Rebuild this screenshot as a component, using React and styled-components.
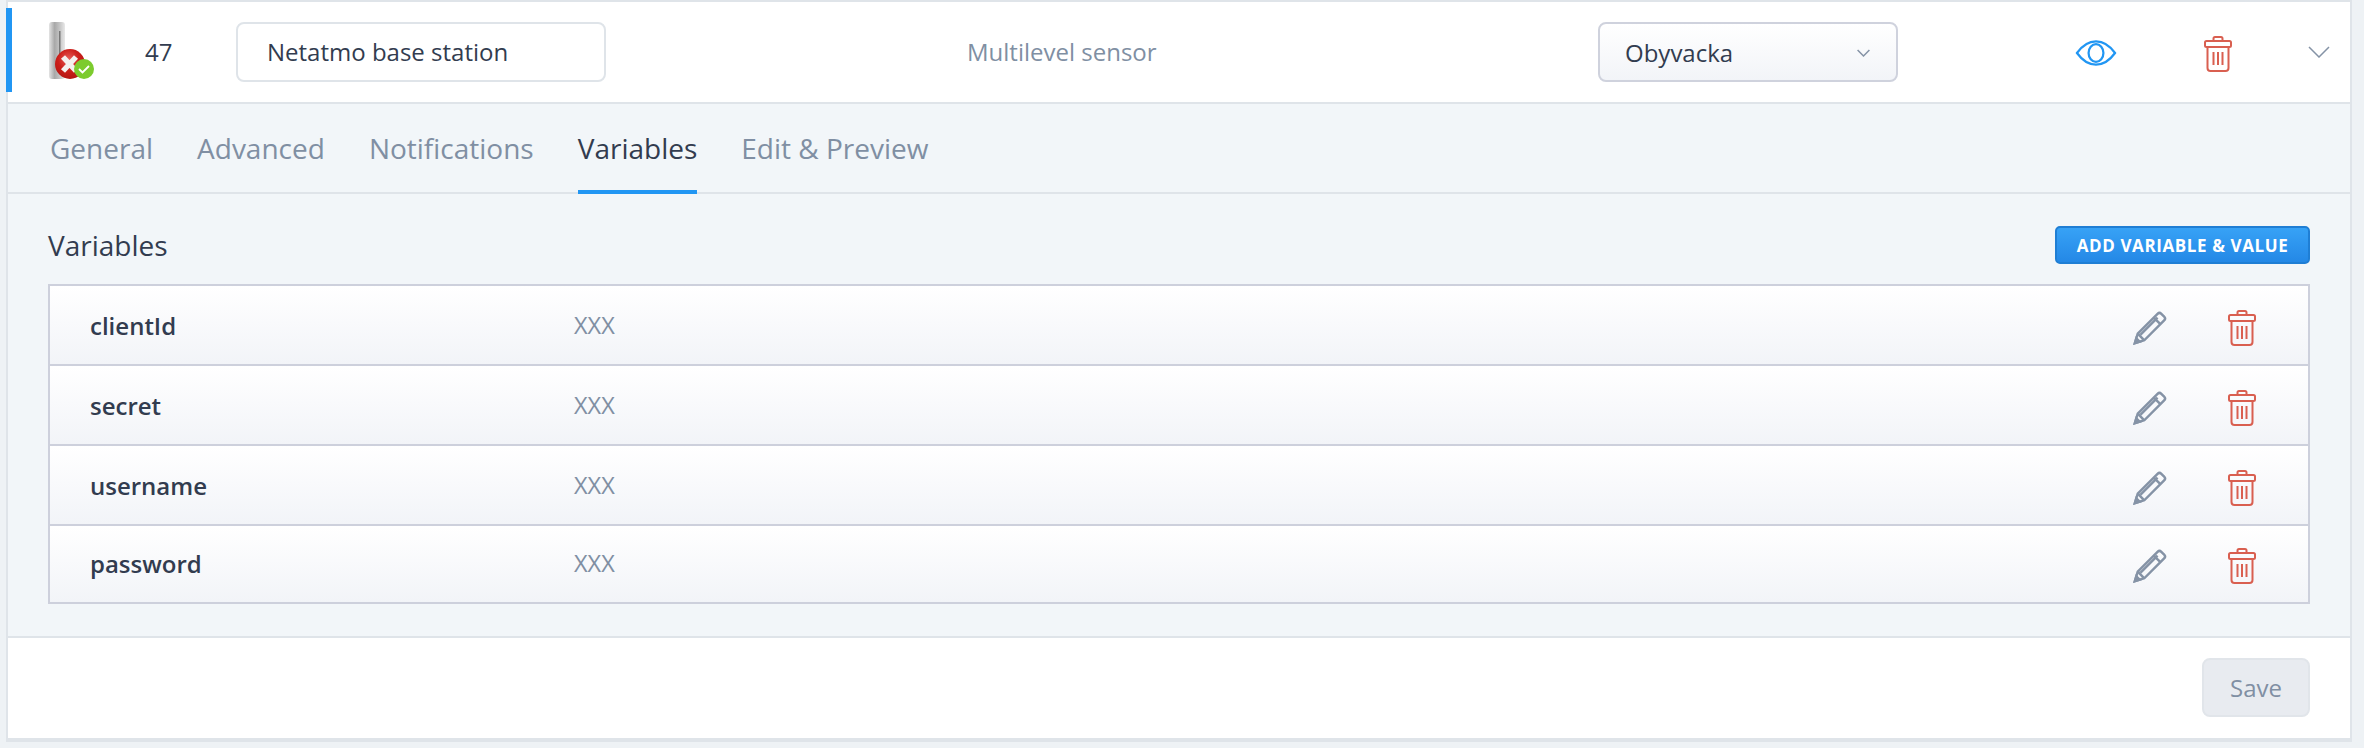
import styled, { createGlobalStyle } from "styled-components";

const GlobalStyle = createGlobalStyle`
  html, body {
    margin: 0;
    padding: 0;
    background: #eef2f5;
    font-family: "Open Sans", sans-serif;
    color: #323c4f;
  }
  * {
    box-sizing: border-box;
  }
`;

const Page = styled.div`
  padding: 0 12px 6px 6px;
  height: 748px;
  overflow: hidden;
`;

const Card = styled.div`
  position: relative;
  background: #fff;
  border: 2px solid #dfe4e9;
  border-bottom-width: 4px;
  border-top-width: 2px;
`;

const ActiveBar = styled.span`
  position: absolute;
  left: -2px;
  top: 6px;
  width: 6px;
  height: 84px;
  background: #2196f3;
`;

const Header = styled.div`
  display: grid;
  grid-template-columns: 137px 91px 370px 361px 631px 476px 130px 104px 1fr;
  align-items: center;
  height: 102px;
  border-bottom: 2px solid #dfe4e9;
`;

const DeviceIcon = styled.div`
  display: flex;
  justify-content: flex-start;
  padding-left: 32px;
`;

const Num = styled.span`
  font-size: 24px;
  padding-bottom: 2px;
`;

const NameInput = styled.div`
  height: 60px;
  padding: 0 29px 2px;
  display: flex;
  align-items: center;
  font-size: 24px;
  border: 2px solid #dfe4e9;
  border-radius: 8px;
  background: #fff;
`;

const TypeText = styled.span`
  font-size: 24px;
  color: #808fa3;
  padding-bottom: 2px;
`;

const Select = styled.div`
  width: 300px;
  height: 60px;
  padding: 0 26px 0 25px;
  display: flex;
  align-items: center;
  justify-content: space-between;
  font-size: 24px;
  border: 2px solid #cfd2dd;
  border-radius: 8px;
  background: linear-gradient(#fff, #f2f4f8);
`;

const Caret = styled.span`
  display: flex;
  padding-top: 2px;
`;

const IconCell = styled.div`
  display: flex;
  align-items: center;
  padding-top: ${(p) => p.$top || 0}px;
`;

const Tabs = styled.div`
  display: flex;
  gap: 44px;
  height: 90px;
  padding-left: 42px;
  background: #f2f6f9;
  border-bottom: 2px solid #dfe4e9;
`;

const Tab = styled.div`
  height: 90px;
  padding-top: 26px;
  font-size: 28px;
  line-height: 37px;
  color: ${(p) => (p.$active ? "#323c4f" : "#808fa3")};
  border-bottom: ${(p) => (p.$active ? "4px solid #2196f3" : "none")};
`;

const Panel = styled.div`
  background: #f2f6f9;
  padding: 32px 40px 32px 40px;
  border-bottom: 2px solid #dfe4e9;
`;

const PanelHead = styled.div`
  display: flex;
  align-items: center;
  justify-content: space-between;
  height: 38px;
  margin-bottom: 20px;
`;

const PanelTitle = styled.span`
  font-size: 28px;
`;

const AddButton = styled.button`
  width: 255px;
  height: 38px;
  padding: 0;
  font-family: inherit;
  font-size: 17px;
  font-weight: 700;
  letter-spacing: 0.6px;
  color: #fff;
  background: linear-gradient(#37a2f6, #2488e6);
  border: 2px solid #1f7ed4;
  border-radius: 5px;
`;

const Table = styled.div`
  border: 2px solid #cdd0dc;
`;

const Row = styled.div`
  display: grid;
  grid-template-columns: 484px 1fr 95px 80px;
  align-items: center;
  height: ${(p) => (p.$last ? "76px" : "80px")};
  padding: 0 0 ${(p) => (p.$last ? "2px" : "0")} 40px;
  background: linear-gradient(#fff, #f2f4f8);
  border-bottom: ${(p) => (p.$last ? "none" : "2px solid #cdd0dc")};
`;

const VarName = styled.span`
  font-size: 24px;
  font-weight: 600;
`;

const VarValue = styled.span`
  font-size: 23.5px;
  color: #808fa3;
`;

const Footer = styled.div`
  display: flex;
  justify-content: flex-end;
  height: 100px;
  padding: 20px 40px 0 0;
`;

const SaveButton = styled.button`
  width: 108px;
  height: 59px;
  padding: 0;
  font-family: inherit;
  font-size: 24px;
  color: #808fa3;
  background: #e8ebf0;
  border: 2px solid #e1e5ea;
  border-radius: 8px;
`;

const Device = () => (
  <svg width="56" height="62" viewBox="0 0 56 62">
    <defs>
      <linearGradient id="tube" x1="0" x2="1" y1="0" y2="0">
        <stop offset="0" stopColor="#e4e4e4" />
        <stop offset="0.35" stopColor="#a8a8a8" />
        <stop offset="0.7" stopColor="#c8c8c8" />
        <stop offset="1" stopColor="#e8e8e8" />
      </linearGradient>
      <radialGradient id="red" cx="0.45" cy="0.35" r="0.7">
        <stop offset="0" stopColor="#e8605c" />
        <stop offset="0.5" stopColor="#cc1f1a" />
        <stop offset="1" stopColor="#b01512" />
      </radialGradient>
    </defs>
    <rect x="9" y="1" width="16" height="57" rx="3" fill="url(#tube)" />
    <rect x="19" y="10" width="1.5" height="32" fill="#777" />
    <circle cx="30" cy="43" r="15" fill="url(#red)" />
    <path d="M23 36 L36 50 M36 36 L23 50" stroke="#f4f0ee" strokeWidth="5.5" />
    <circle cx="44" cy="48" r="10" fill="#7ccb2e" />
    <path d="M39 48 L42.500 51.500 L49 45" fill="none" stroke="#fff" strokeWidth="1.8" />
  </svg>
);

const Eye = () => (
  <svg width="44" height="26" viewBox="0 0 44 28" fill="none" stroke="#2196f3" strokeWidth="2.400">
    <path d="M1.500 14 C8 5 15 1.500 22 1.500 C29 1.500 36 5 42.500 14 C36 23 29 26.500 22 26.500 C15 26.500 8 23 1.500 14 Z" />
    <ellipse cx="22" cy="14" rx="8" ry="9.500" />
  </svg>
);

const Trash = ({ w = 28, h = 36 }) => (
  <svg width={w} height={h} viewBox="0 0 28 36" fill="none" stroke="#d95f50" strokeWidth="2">
    <path d="M9.500 5 V2.500 Q9.500 1 11 1 H17 Q18.500 1 18.500 2.500 V5" />
    <rect x="1" y="5" width="26" height="6" rx="1.500" />
    <path d="M3.500 11 V32 Q3.500 35 6.500 35 H21.500 Q24.500 35 24.500 32 V11" />
    <path d="M9.500 16 V29 M14 16 V29 M18.500 16 V29" />
  </svg>
);

const Pencil = () => (
  <svg width="34" height="34" viewBox="0 0 36 36" fill="none" stroke="#8593a6" strokeWidth="2.600">
    <path d="M2 34 L5 24 L26 3 Q28 1 30 3 L33 6 Q35 8 33 10 L12 31 Z" />
    <path d="M2 34 L3.500 29 L7 32.500 Z" fill="#8593a6" />
    <path d="M5 24 L12 31 M8 25 L26 7 M22 7 L29 14" />
  </svg>
);

const Chevron = ({ w, h, sw }) => (
  <svg width={w} height={h} viewBox="0 0 22 12" fill="none" stroke="#8593a6" strokeWidth={sw}>
    <path d="M1 1 L11 11 L21 1" />
  </svg>
);

const rows = ["clientId", "secret", "username", "password"];
const tabs = ["General", "Advanced", "Notifications", "Variables", "Edit & Preview"];

const App = () => {
  return (
    <Page>
      <GlobalStyle />
      <Card>
        <ActiveBar />
        <Header>
          <DeviceIcon>
            <Device />
          </DeviceIcon>
          <Num>47</Num>
          <NameInput>Netatmo base station</NameInput>
          <span />
          <TypeText>Multilevel sensor</TypeText>
          <div>
            <Select>
              Obyvacka
              <Caret>
                <Chevron w={13} h={8} sw={2.600} />
              </Caret>
            </Select>
          </div>
          <IconCell $top={2}>
            <Eye />
          </IconCell>
          <IconCell $top={4}>
            <Trash />
          </IconCell>
          <IconCell>
            <Chevron w={22} h={12} sw={1.500} />
          </IconCell>
        </Header>
        <Tabs>
          {tabs.map((t) => (
            <Tab key={t} $active={t === "Variables"}>
              {t}
            </Tab>
          ))}
        </Tabs>
        <Panel>
          <PanelHead>
            <PanelTitle>Variables</PanelTitle>
            <AddButton>ADD VARIABLE &amp; VALUE</AddButton>
          </PanelHead>
          <Table>
            {rows.map((r, i) => (
              <Row key={r} $last={i === rows.length - 1}>
                <VarName>{r}</VarName>
                <VarValue>XXX</VarValue>
                <IconCell $top={6}>
                  <Pencil />
                </IconCell>
                <IconCell $top={6}>
                  <Trash />
                </IconCell>
              </Row>
            ))}
          </Table>
        </Panel>
        <Footer>
          <SaveButton>Save</SaveButton>
        </Footer>
      </Card>
    </Page>
  );
};

export default App;
